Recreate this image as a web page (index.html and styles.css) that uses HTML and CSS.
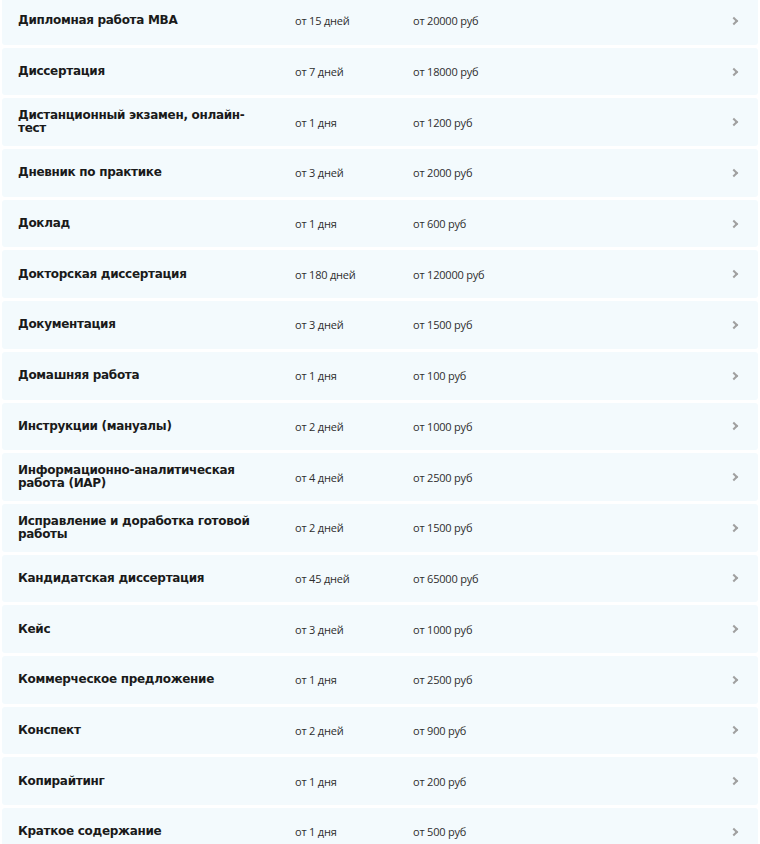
FILE: index.html
```html
<!DOCTYPE html>
<html lang="ru">
<head>
  <meta charset="UTF-8">
  <title>Цены на работы</title>
  <link rel="stylesheet" href="styles.css">
</head>
<body>
  <div class="list">
    <a class="row" href="#"><span class="name">Дипломная работа MBA</span><span class="term">от 15 дней</span><span class="price">от 20000 руб</span><span class="arrow"></span></a>
    <a class="row" href="#"><span class="name">Диссертация</span><span class="term">от 7 дней</span><span class="price">от 18000 руб</span><span class="arrow"></span></a>
    <a class="row" href="#"><span class="name">Дистанционный экзамен, онлайн-тест</span><span class="term">от 1 дня</span><span class="price">от 1200 руб</span><span class="arrow"></span></a>
    <a class="row" href="#"><span class="name">Дневник по практике</span><span class="term">от 3 дней</span><span class="price">от 2000 руб</span><span class="arrow"></span></a>
    <a class="row" href="#"><span class="name">Доклад</span><span class="term">от 1 дня</span><span class="price">от 600 руб</span><span class="arrow"></span></a>
    <a class="row" href="#"><span class="name">Докторская диссертация</span><span class="term">от 180 дней</span><span class="price">от 120000 руб</span><span class="arrow"></span></a>
    <a class="row" href="#"><span class="name">Документация</span><span class="term">от 3 дней</span><span class="price">от 1500 руб</span><span class="arrow"></span></a>
    <a class="row" href="#"><span class="name">Домашняя работа</span><span class="term">от 1 дня</span><span class="price">от 100 руб</span><span class="arrow"></span></a>
    <a class="row" href="#"><span class="name">Инструкции (мануалы)</span><span class="term">от 2 дней</span><span class="price">от 1000 руб</span><span class="arrow"></span></a>
    <a class="row" href="#"><span class="name">Информационно-аналитическая работа (ИАР)</span><span class="term">от 4 дней</span><span class="price">от 2500 руб</span><span class="arrow"></span></a>
    <a class="row" href="#"><span class="name">Исправление и доработка готовой работы</span><span class="term">от 2 дней</span><span class="price">от 1500 руб</span><span class="arrow"></span></a>
    <a class="row" href="#"><span class="name">Кандидатская диссертация</span><span class="term">от 45 дней</span><span class="price">от 65000 руб</span><span class="arrow"></span></a>
    <a class="row" href="#"><span class="name">Кейс</span><span class="term">от 3 дней</span><span class="price">от 1000 руб</span><span class="arrow"></span></a>
    <a class="row" href="#"><span class="name">Коммерческое предложение</span><span class="term">от 1 дня</span><span class="price">от 2500 руб</span><span class="arrow"></span></a>
    <a class="row" href="#"><span class="name">Конспект</span><span class="term">от 2 дней</span><span class="price">от 900 руб</span><span class="arrow"></span></a>
    <a class="row" href="#"><span class="name">Копирайтинг</span><span class="term">от 1 дня</span><span class="price">от 200 руб</span><span class="arrow"></span></a>
    <a class="row" href="#"><span class="name">Краткое содержание</span><span class="term">от 1 дня</span><span class="price">от 500 руб</span><span class="arrow"></span></a>
  </div>
</body>
</html>
```

FILE: styles.css
```css
body {
  margin: 0;
  background: #fff;
  font-family: "Open Sans", Arial, sans-serif;
  overflow: hidden;
}

.list {
  display: flex;
  flex-direction: column;
  gap: 3px;
  margin-top: -3px;
  padding: 0 2px;
}

.row {
  display: grid;
  grid-template-columns: 277px 118px 1fr auto;
  align-items: center;
  height: 47.7px;
  padding: 0 19px 0 16px;
  background: #f3fafd;
  border-radius: 3px;
  color: #222;
  text-decoration: none;
}

.name {
  font-family: "DejaVu Sans", Verdana, sans-serif;
  font-weight: bold;
  font-size: 12px;
  line-height: 13px;
  letter-spacing: -0.3px;
  color: #1a1a1a;
  max-width: 245px;
}

.term,
.price {
  font-size: 11px;
  color: #2e2e2e;
  letter-spacing: -0.2px;
}

.arrow {
  width: 4px;
  height: 4px;
  border-top: 2px solid #a0a0a0;
  border-right: 2px solid #a0a0a0;
  transform: rotate(45deg);
  margin-right: 2px;
}
```
